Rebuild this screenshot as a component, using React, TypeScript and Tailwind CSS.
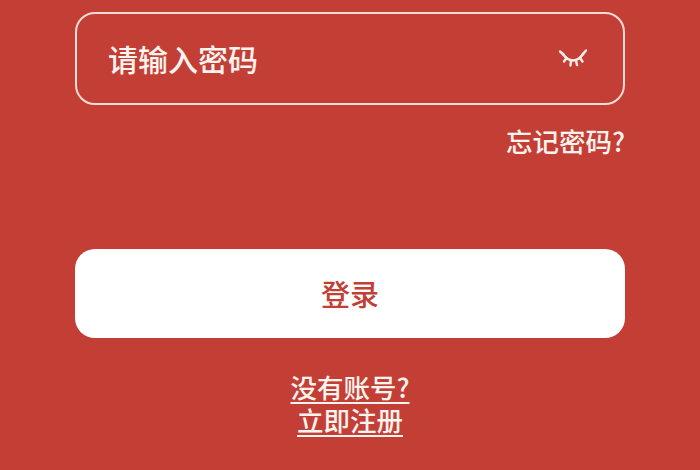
export default function App() {
  return (
    <div
      className="w-[700px] h-[470px] overflow-hidden bg-[#c33f36] flex flex-col px-[75px] pt-[12px] text-[#fdf3ef]"
      style={{ fontFamily: '"Noto Sans CJK SC", "Liberation Sans", sans-serif' }}
    >
      <div className="h-[93px] shrink-0 rounded-[20px] border-2 border-[#f8dcd5] flex items-center justify-between pl-[31px] pr-[36px]">
        <span className="text-[30px] leading-none font-medium mb-[2px]">请输入密码</span>
        <svg width="28" height="22" viewBox="0 0 28 22" fill="none" stroke="#fdf0ea" strokeWidth="2.4" strokeLinecap="round">
          <path d="M3.500 5.500C7 10.500 10.500 12.500 14 12.500C17.500 12.500 21 10.500 24.500 5.500" />
          <path d="M1 3.500L4.500 6.500M7.500 10L5 13.500M12 12.500L11.500 17.500M17 12.500L18 17M21 10L23.500 13.500M23.500 6.500L27 2.500" />
        </svg>
      </div>
      <div className="mt-[18px] h-[36px] flex justify-end items-center text-[26.500px] leading-none font-medium">
        <span>忘记密码?</span>
      </div>
      <button className="mt-[90px] h-[89px] shrink-0 rounded-[20px] bg-white text-[#c33f36] text-[29px] leading-none font-medium flex items-center justify-center">
        <span>登录</span>
      </button>
      <div className="mt-[32px] flex flex-col items-center text-[26.500px] leading-[33px] font-medium underline underline-offset-[4px]">
        <span>没有账号?</span>
        <span>立即注册</span>
      </div>
    </div>
  );
}
